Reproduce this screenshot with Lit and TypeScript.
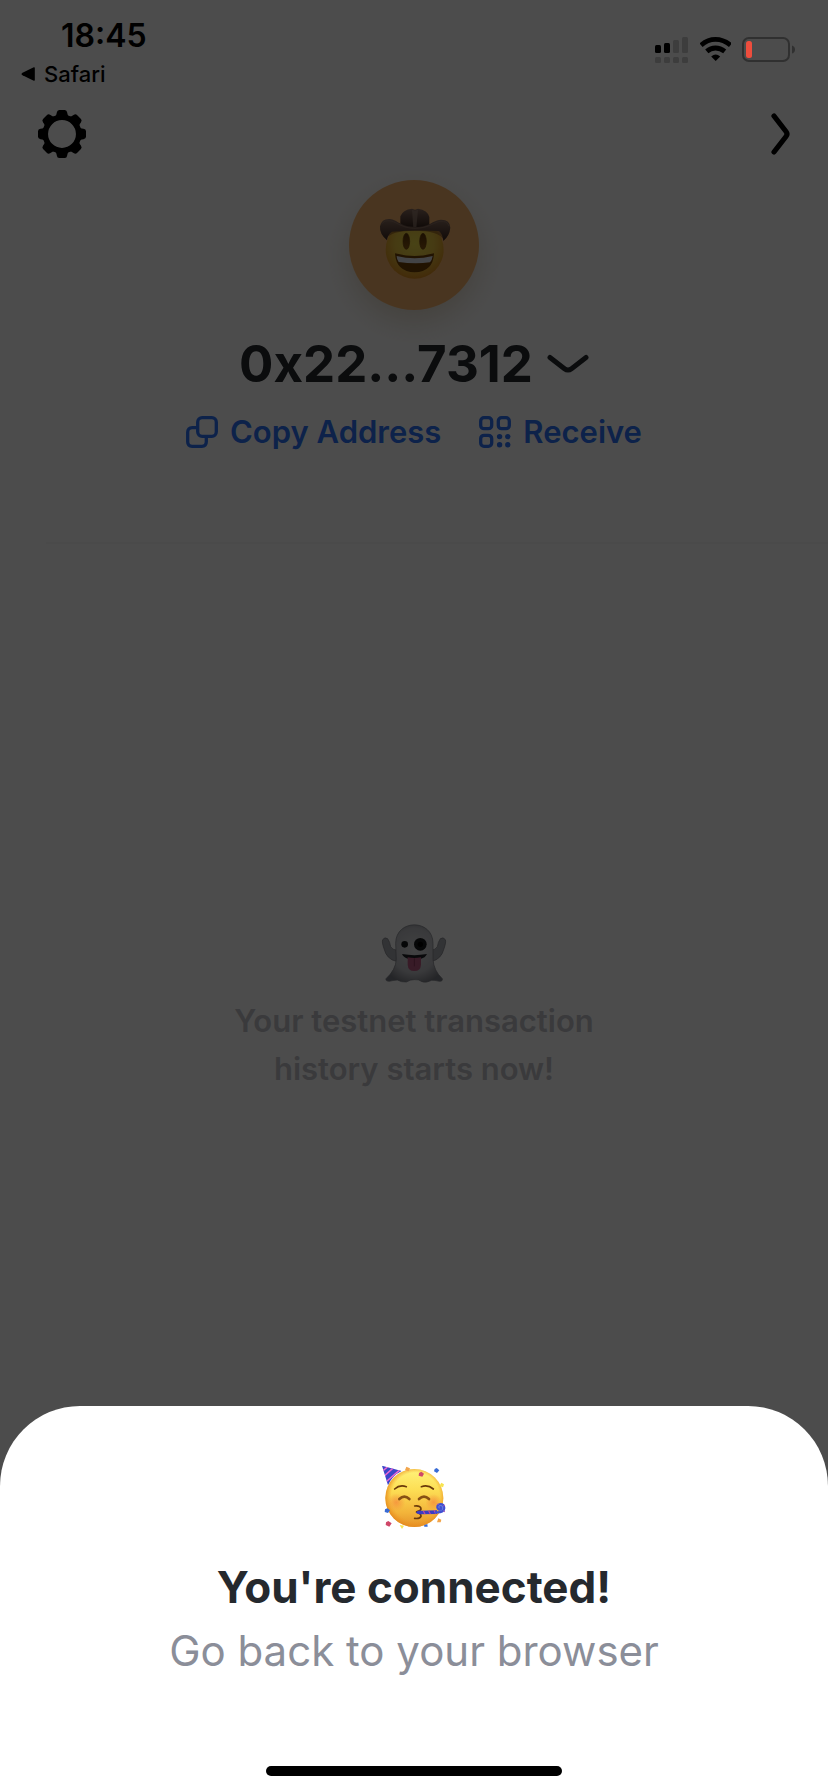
import { LitElement, html, css, svg } from "lit";
import { customElement } from "lit/decorators.js";

const gearTeeth = [0, 45, 90, 135, 180, 225, 270, 315];

@customElement("status-bar")
class StatusBar extends LitElement {
  static styles = css`
    :host {
      display: flex;
      justify-content: space-between;
      align-items: flex-start;
      padding: 16px 32px 0 21px;
      color: #000;
    }
    .time {
      font-size: 32px;
      line-height: 40px;
      font-weight: 600;
      padding-left: 40px;
    }
    .back {
      display: flex;
      align-items: center;
      gap: 8px;
      font-size: 22px;
      line-height: 36px;
      font-weight: 500;
      color: inherit;
      text-decoration: none;
    }
    .indicators {
      display: flex;
      gap: 11px;
      padding-top: 20px;
    }
    svg {
      display: block;
    }
  `;

  render() {
    return html`
      <div>
        <div class="time">18:45</div>
        <a class="back" href="#safari">
          <svg width="15" height="14" viewBox="0 0 15 14"><path d="M13.800 1V13Q13.800 14 12.800 13.700L1.500 8.300Q-.5 7 1.500 5.700L12.800.3Q13.800 0 13.800 1z" /></svg>
          Safari
        </a>
      </div>
      <div class="indicators">
        <svg width="34" height="28" viewBox="0 0 34 28" role="img" aria-label="Signal: two of four bars">
          <rect x="0" y="9" width="6" height="8" rx="1.500" />
          <rect x="9" y="7" width="6" height="10" rx="1.500" />
          <g fill="#3d3d3d">
            <rect x="18" y="4" width="6" height="13" rx="1.500" />
            <rect x="27" y="1" width="6" height="16" rx="1.500" />
            ${[0, 9, 18, 27].map((x) => svg`<rect x=${x} y="21" width="6" height="6" rx="1.500" />`)}
          </g>
        </svg>
        <svg width="31" height="28" viewBox="0 0 31 28" role="img" aria-label="Wi-Fi">
          <g fill="none" stroke="#000" stroke-width="4.800">
            <path d="M1 9.200Q7.500 3.400 15.500 3.400T30.500 9.200" />
            <path d="M6.800 15.400Q10.600 12 15.500 12T24.700 15.400" />
          </g>
          <path d="M11.200 20.600Q15.700 16.600 20.200 20.600L15.700 25z" />
        </svg>
        <svg width="54" height="28" viewBox="0 0 54 28" role="img" aria-label="Battery low">
          <rect x="1" y="2" width="46" height="23" rx="6" fill="none" stroke="#303030" stroke-width="2" />
          <path d="M50 9.500q3 1 3 4t-3 4z" fill="#303030" />
          <rect x="4" y="5" width="6" height="17" rx="2.500" fill="#ee4d3d" />
        </svg>
      </div>
    `;
  }
}

@customElement("wallet-screen")
class WalletScreen extends LitElement {
  static styles = css`
    :host {
      display: flex;
      flex-direction: column;
      align-items: center;
      padding-top: 110px;
      background: #fff;
      color: #25292e;
    }
    svg {
      display: block;
    }
    button {
      font: inherit;
      color: inherit;
      background: none;
      border: 0;
      padding: 0;
    }
    .toolbar {
      align-self: stretch;
      display: flex;
      justify-content: space-between;
      padding: 0 38px;
    }
    .avatar {
      margin-top: 22px;
      border-radius: 50%;
      background: #f5b36c;
      box-shadow: 0 12px 28px rgba(170, 140, 90, 0.3);
    }
    .account {
      display: flex;
      align-items: center;
      gap: 14px;
      margin-top: 22px;
      font-size: 51px;
      line-height: 64px;
      font-weight: 700;
    }
    .name {
      font: inherit;
      margin: 0;
    }
    .actions {
      display: flex;
      gap: 38px;
      margin-top: 16px;
    }
    .action {
      display: flex;
      align-items: center;
      gap: 12px;
      font-size: 31px;
      line-height: 40px;
      font-weight: 600;
      color: #2c73f8;
    }
    .divider {
      align-self: stretch;
      margin: 90px 0 0 46px;
      border: 0;
      border-top: 2px solid #f8f8f8;
    }
    .empty {
      display: flex;
      flex-direction: column;
      align-items: center;
      gap: 13px;
      padding: 379px 24px 0;
    }
    .message {
      margin: 0;
      max-width: 400px;
      text-align: center;
      font-size: 31px;
      line-height: 48px;
      font-weight: 600;
      color: #c2c3c9;
    }
  `;

  render() {
    return html`
      <div class="toolbar">
        <button aria-label="Settings">
          <svg width="48" height="48" viewBox="-24 -24 48 48">
            <circle r="16.700" fill="none" stroke="#000" stroke-width="5.500" />
            ${gearTeeth.map((a) => svg`<path transform="rotate(${a})" d="M-9-16Q-5.500-17.500-5.200-21.500-4.800-24-2.800-24H2.800Q4.800-24 5.200-21.500 5.500-17.500 9-16z" />`)}
          </svg>
        </button>
        <button aria-label="Next">
          <svg width="48" height="48" viewBox="0 0 48 48" fill="none" stroke="#000" stroke-width="5.200" stroke-linecap="round" stroke-linejoin="round">
            <path d="M32 6L44 21.500Q46 24 44 26.500L32 42" />
          </svg>
        </button>
      </div>

      <div class="avatar">
        <svg width="130" height="130" viewBox="45 45 390 390" role="img" aria-label="Cowboy">
          <defs>
            <radialGradient id="face" cx=".5" cy=".4" r=".62">
              <stop offset="0" stop-color="#f2e04a" />
              <stop offset=".55" stop-color="#e9c440" />
              <stop offset="1" stop-color="#dc8a1e" />
            </radialGradient>
            <linearGradient id="hat" x2="0" y2="1">
              <stop offset="0" stop-color="#8a6e60" />
              <stop offset=".6" stop-color="#5a4238" />
              <stop offset="1" stop-color="#38251e" />
            </linearGradient>
            <linearGradient id="eye" x2="0" y2="1">
              <stop offset="0" stop-color="#5b3508" />
              <stop offset="1" stop-color="#8c5710" />
            </linearGradient>
          </defs>
          <circle cx="242" cy="254" r="87" fill="url(#face)" />
          <path d="M156 222Q157 198 170 190L318 190Q328 204 329 224Q314 197 242 197T156 222z" fill="#8a5a1e" opacity=".65" />
          <path d="M199 186V154Q206 134 234 131L243 134 252 131Q281 135 286 156V186z" fill="url(#hat)" />
          <path d="M234 134L243 137 252 134 247 188H238z" fill="#a58c7d" opacity=".6" />
          <path d="M159 226Q136 207 138 184 143 160 168 162C190 164 199 185 243 186S294 166 320 164Q348 163 349 188 347 212 328 228 326 207 315 198 243 194 174 200 160 210 159 226z" fill="url(#hat)" />
          <path d="M142 178Q151 164 171 168C192 173 205 190 243 190S296 174 318 169Q340 166 345 184" fill="none" stroke="#97796a" stroke-width="3" opacity=".65" />
          <ellipse cx="217" cy="229" rx="10" ry="24" fill="url(#eye)" stroke="#694009" stroke-width="2" />
          <ellipse cx="267" cy="229" rx="10" ry="24" fill="url(#eye)" stroke="#694009" stroke-width="2" />
          <path d="M183 265Q242 281 300 265 298 320 242 322 186 320 183 265z" fill="#704006" />
          <path d="M188 273Q242 287 296 273 294 286 288 292 242 298 194 291 188 283 188 273z" fill="#e0e3ea" />
        </svg>
      </div>

      <button class="account">
        <h1 class="name">0x22...7312</h1>
        <svg width="42" height="24" viewBox="0 0 42 24" fill="none" stroke="#25292e" stroke-width="5" stroke-linecap="round" stroke-linejoin="round">
          <path d="M3 5.500L17.500 16.700Q21 19.300 24.500 16.700L39 5.500" />
        </svg>
      </button>

      <div class="actions">
        <button class="action">
          <svg width="32" height="32" viewBox="0 0 32 32" fill="none" stroke="currentColor" stroke-width="3.300">
            <rect x="11.700" y="1.700" width="18.600" height="18.600" rx="4.500" />
            <path d="M11.700 11.700H6.200Q1.700 11.700 1.700 16.200V25.800Q1.700 30.300 6.200 30.300H15.800Q20.300 30.300 20.300 25.800V20.300" />
          </svg>
          Copy Address
        </button>
        <button class="action">
          <svg width="32" height="32" viewBox="0 0 32 32" fill="none" stroke="currentColor" stroke-width="3.300">
            <rect x="1.700" y="1.700" width="11" height="11" rx="3.300" />
            <rect x="19.300" y="1.700" width="11" height="11" rx="3.300" />
            <rect x="1.700" y="19.300" width="11" height="11" rx="3.300" />
            <g fill="currentColor" stroke="none">
              <circle cx="20.600" cy="20.600" r="2.700" />
              <circle cx="28.800" cy="20.600" r="2.700" />
              <circle cx="20.600" cy="28.800" r="2.700" />
              <circle cx="28.800" cy="28.800" r="2.700" />
            </g>
          </svg>
          Receive
        </button>
      </div>

      <hr class="divider" />

      <div class="empty">
        <svg width="66" height="61" viewBox="51 51 198 183" role="img" aria-label="Ghost">
          <defs>
            <radialGradient id="body" cx=".5" cy=".45" r=".6">
              <stop offset="0" stop-color="#dcdde0" />
              <stop offset=".65" stop-color="#bfc0c6" />
              <stop offset="1" stop-color="#7b7d85" />
            </radialGradient>
          </defs>
          <path d="M97 166Q68 160 60 128 53 108 56 101 62 92 71 98 78 108 80 122 86 132 97 132zM203 166Q232 160 240 128 247 108 244 101 238 92 229 98 222 108 220 122 214 132 203 132z" fill="#a9aab1" stroke="#777981" stroke-width="2" />
          <path d="M95 112C95 38 207 38 207 112V160Q209 194 235 218 237 226 226 226 211 222 203 223 186 232 174 227 163 219 151 221 140 220 127 228 112 229 100 222 86 223 76 226 64 226 66 218 95 192 97 160z" fill="url(#body)" stroke="#7c7e86" stroke-width="2" />
          <circle cx="122" cy="115" r="10" fill="#17181b" />
          <circle cx="169" cy="115" r="19" fill="#17181b" />
          <circle cx="169" cy="115" r="8" fill="#000" />
          <path d="M114 144Q151 151 189 144 183 156 171 158H132Q119 155 114 144z" fill="#202126" />
          <path d="M131 154Q151 158 171 154V176Q170 195 151 195T131 176z" fill="#bd5c84" />
          <path d="M151 157V181" stroke="#8e3c60" stroke-width="3" />
        </svg>
        <p class="message">Your testnet transaction history starts now!</p>
      </div>
    `;
  }
}

@customElement("connected-sheet")
class ConnectedSheet extends LitElement {
  static styles = css`
    :host {
      display: flex;
      flex-direction: column;
      align-items: center;
      padding: 58px 24px 16px;
      border-radius: 80px 80px 0 0;
      background: #fff;
      text-align: center;
    }
    .title,
    .note {
      margin: 0;
      line-height: 64px;
    }
    .title {
      margin-top: 25px;
      font-size: 44px;
      font-weight: 700;
      color: #25292e;
    }
    .note {
      font-size: 42px;
      font-weight: 400;
      color: #8b8e99;
    }
    .home {
      width: 296px;
      height: 10px;
      margin-top: 83px;
      border-radius: 5px;
      background: #000;
    }
  `;

  render() {
    return html`
      <svg width="68" height="66" viewBox="48 42 204 198" role="img" aria-label="Partying face">
        <defs>
          <linearGradient id="skin" x2="0" y2="1">
            <stop offset="0" stop-color="#fff27a" />
            <stop offset=".35" stop-color="#fddf55" />
            <stop offset=".75" stop-color="#f3b43a" />
            <stop offset="1" stop-color="#e4922a" />
          </linearGradient>
          <radialGradient id="rim" cx=".52" cy=".48" r=".52">
            <stop offset=".8" stop-color="#f39a25" stop-opacity="0" />
            <stop offset="1" stop-color="#e58a1c" stop-opacity=".85" />
          </radialGradient>
          <radialGradient id="blush">
            <stop offset="0" stop-color="#f58a3c" stop-opacity=".75" />
            <stop offset="1" stop-color="#f58a3c" stop-opacity="0" />
          </radialGradient>
          <clipPath id="cone"><path d="M54 47L113 63Q85 76 72 106z" /></clipPath>
        </defs>
        <circle cx="151" cy="144" r="87" fill="url(#skin)" />
        <circle cx="151" cy="144" r="87" fill="url(#rim)" />
        <circle cx="97" cy="157" r="27" fill="url(#blush)" />
        <circle cx="209" cy="157" r="25" fill="url(#blush)" />
        <g clip-path="url(#cone)">
          <path d="M50 42H120V110H50z" fill="#3a45c8" />
          <path d="M52 66L74 48M55 83L92 50M62 99L112 56" stroke="#e868d2" stroke-width="4.500" />
        </g>
        <g fill="none" stroke="#6b3a0a" stroke-linecap="round">
          <path d="M92 117Q107 103 127 110M172 110Q192 103 208 117" stroke-width="5" />
          <path d="M106 147Q121 133 136 147M165 147Q180 133 195 147" stroke-width="8" stroke="#875014" />
          <path d="M152 168Q171 166 171 177 170 183 156 186 172 190 171 199 167 207 152 205" stroke-width="5" />
        </g>
        <path d="M156 187Q160 181 172 182L219 181V192L172 193Q158 193 156 187z" fill="#3a3cc4" />
        <path d="M178 183L183 192M194 182L199 192M210 181L215 191" stroke="#c8459b" stroke-width="3.500" />
        <circle cx="230" cy="173" r="10" fill="#6c84dc" />
        <path d="M215 187Q241 189 241 174 240 162 230 162 219 163 220 173 223 181 231 177 233 171 229 171" fill="none" stroke="#3f50d2" stroke-width="6.500" stroke-linecap="round" />
        <path d="M238 168L243 165M223 165L220 161M238 182L243 186" stroke="#b955b4" stroke-width="3" />
        <g fill="#cf4768">
          <path d="M172 65L180 71 175 80 164 77 165 69z" />
          <path d="M73 213L83 220 76 230 65 225 66 217z" />
        </g>
        <g fill="#386bd5">
          <path d="M218 54L226 61 219 69 210 64 212 57z" />
          <path d="M70 175L78 181 72 189 62 186 63 178z" />
          <path d="M180 226L190 222 191 230H181z" />
        </g>
        <g fill="#f2a54b">
          <path d="M127 50L138 55 134 64 123 61z" />
          <path d="M223 205L232 209 230 217 219 217z" />
        </g>
        <g fill="#f8e44e">
          <path d="M232 98L240 103 237 112 226 108z" />
          <path d="M107 225L120 227 114 237z" />
        </g>
      </svg>
      <h2 class="title">You're connected!</h2>
      <p class="note">Go back to your browser</p>
      <div class="home"></div>
    `;
  }
}

@customElement("app-root")
class AppRoot extends LitElement {
  static styles = css`
    :host {
      display: grid;
      min-height: 100vh;
      font-family: Inter, "Liberation Sans", sans-serif;
    }
    .screen,
    .scrim,
    .status {
      grid-area: 1 / 1;
      min-width: 0;
    }
    .scrim {
      z-index: 1;
      display: flex;
      flex-direction: column;
      justify-content: flex-end;
      background: rgba(0, 0, 0, 0.7);
    }
    .status {
      z-index: 2;
      align-self: start;
    }
  `;

  render() {
    return html`
      <wallet-screen class="screen"></wallet-screen>
      <div class="scrim">
        <connected-sheet role="dialog" aria-label="You're connected!"></connected-sheet>
      </div>
      <status-bar class="status"></status-bar>
    `;
  }
}
